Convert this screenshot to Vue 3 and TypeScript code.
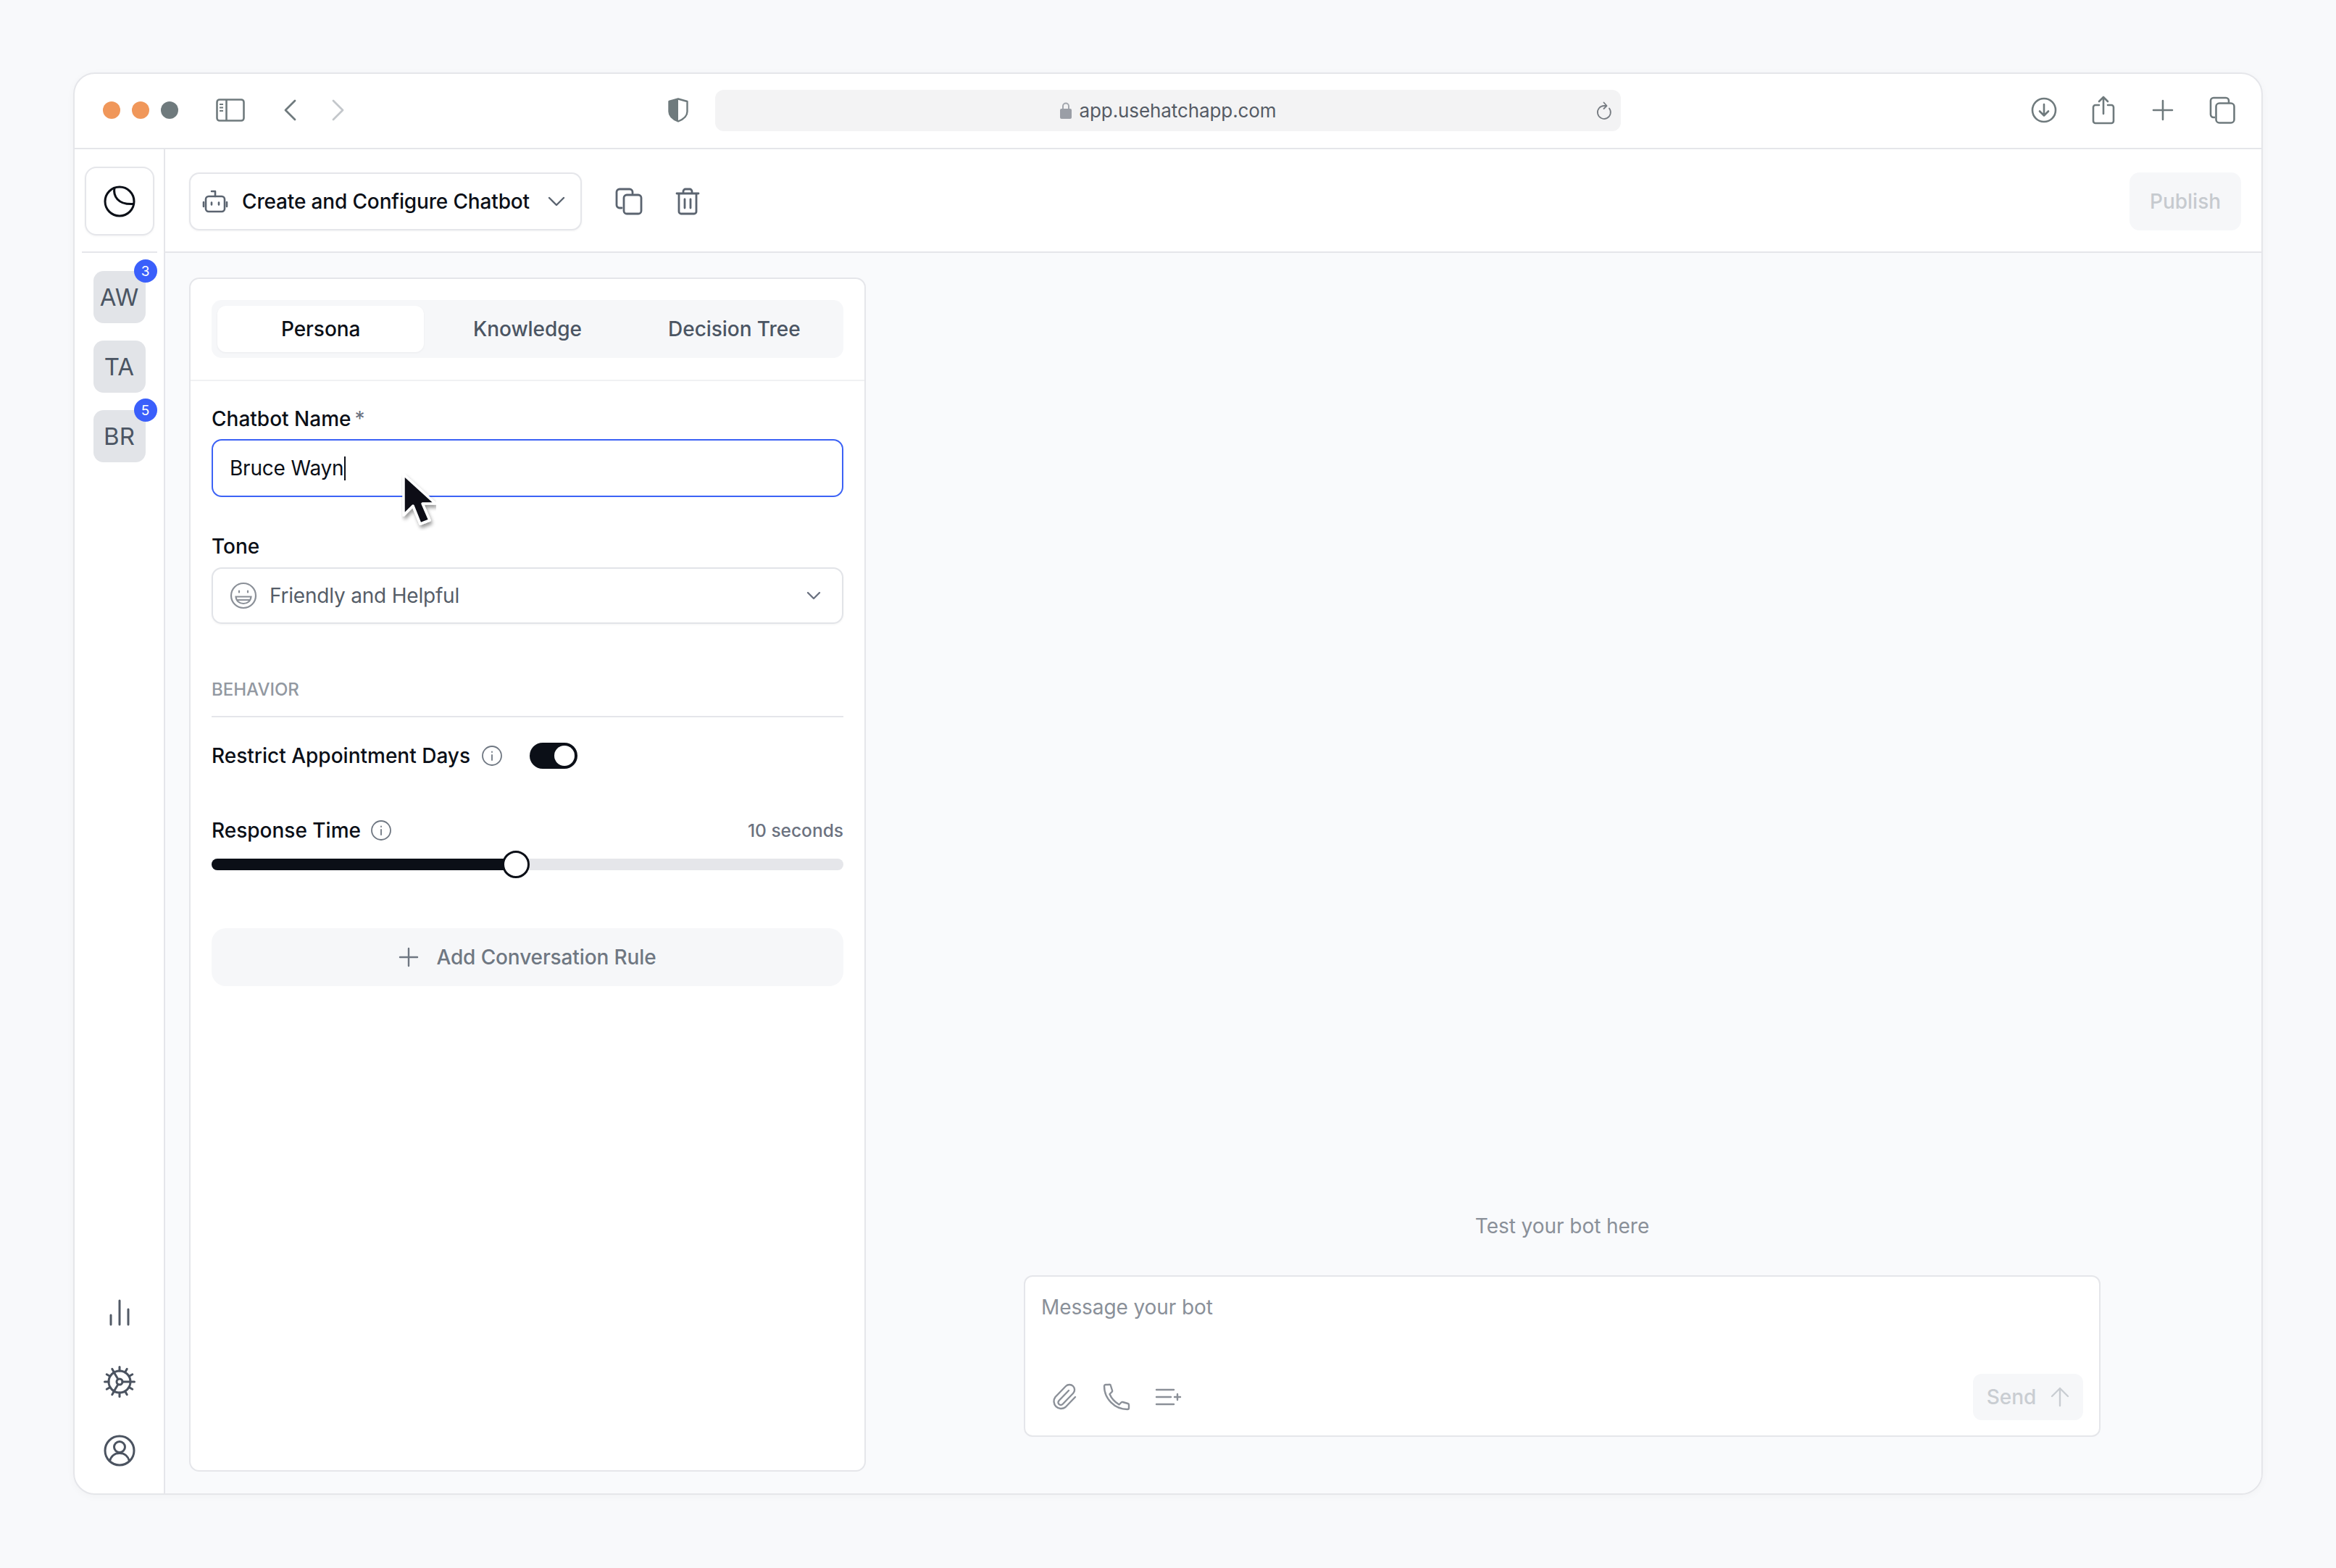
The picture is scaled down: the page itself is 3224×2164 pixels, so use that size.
<script setup lang="ts">
interface Chat { initials: string; badge?: number }
const chats: Chat[] = [
  { initials: 'AW', badge: 3 },
  { initials: 'TA' },
  { initials: 'BR', badge: 5 },
]
const tabs: string[] = ['Persona', 'Knowledge', 'Decision Tree']
const teeth: string[] = Array.from({ length: 12 }, (_, i) => {
  const a = (i * Math.PI) / 6
  const p = (r: number) => `${(22 + r * Math.cos(a)).toFixed(2)} ${(22 + r * Math.sin(a)).toFixed(2)}`
  return `M${p(15)}L${p(20.5)}`
})
const sliderPct = 48.2
</script>

<template>
  <div class="page">
    <div class="window">
      <header class="chrome">
        <div class="lights"><i class="l o"></i><i class="l o"></i><i class="l g"></i></div>
        <svg class="ic panel" width="40" height="32" viewBox="0 0 40 32" fill="none" stroke="#6f7a7d" stroke-width="2.6">
          <rect x="1.5" y="1.5" width="37" height="29" rx="3.5" />
          <path d="M14.5 1.500v29" />
          <path d="M5 8h5M5 12.500h5M5 17h5" stroke-width="2" />
        </svg>
        <svg class="ic back" width="18" height="30" viewBox="0 0 18 30" fill="none" stroke="#6f7a7d" stroke-width="2.8" stroke-linecap="round" stroke-linejoin="round"><path d="M16 2 3 15l13 13" /></svg>
        <svg class="ic fwd" width="18" height="30" viewBox="0 0 18 30" fill="none" stroke="#c3c7cb" stroke-width="2.800" stroke-linecap="round" stroke-linejoin="round"><path d="m2 2 13 13L2 28" /></svg>
        <svg class="ic shield" width="28" height="34" viewBox="0 0 28 34" fill="none">
          <path d="M14 1.500 26.500 5v14c0 6-5 10.500-12.500 13.500C6.500 29.500 1.500 25 1.500 19V5z" fill="#fff" stroke="#6f7a7d" stroke-width="2.400" stroke-linejoin="round" />
          <path d="M14 1.500 1.500 5v14c0 6 5 10.500 12.500 13.500z" fill="#6f7a7d" />
        </svg>
        <div class="url">
          <svg width="16" height="24" viewBox="0 0 16 24" fill="none"><path d="M4 11V6.500a4 4 0 0 1 8 0V11" stroke="#a3a7ae" stroke-width="2" /><rect y="10" width="16" height="14" rx="2" fill="#9a9ea6" /></svg>
          <span>app.usehatchapp.com</span>
          <svg class="reload" width="24" height="26" viewBox="0 0 24 26" fill="none" stroke="#777c82" stroke-width="1.800" stroke-linecap="round" stroke-linejoin="round"><path d="M18 9.500a9 9 0 1 1-7-3.500h3" /><path d="M10.500 1.500 14.500 6l-4 4" /></svg>
        </div>
        <div class="chrome-right">
          <svg width="36" height="36" viewBox="0 0 36 36" fill="none" stroke="#6f7a7d" stroke-width="2.600" stroke-linecap="round" stroke-linejoin="round"><circle cx="18" cy="18" r="16" /><path d="M18 10v15M12 19.500l6 6 6-6" /></svg>
          <svg width="32" height="40" viewBox="0 0 32 40" fill="none" stroke="#6f7a7d" stroke-width="2.600" stroke-linecap="round" stroke-linejoin="round"><path d="M10 13H5a3 3 0 0 0-3 3v19a3 3 0 0 0 3 3h22a3 3 0 0 0 3-3V16a3 3 0 0 0-3-3h-5" /><path d="M16 25V2M10 8l6-6 6 6" /></svg>
          <svg width="30" height="30" viewBox="0 0 30 30" fill="none" stroke="#6f7a7d" stroke-width="2.600" stroke-linecap="round"><path d="M15 2v26M2 15h26" /></svg>
          <svg width="36" height="38" viewBox="0 0 36 38" fill="none" stroke="#6f7a7d" stroke-width="2.600" stroke-linejoin="round"><path d="M8 29H6a4 4 0 0 1-4-4V6a4 4 0 0 1 4-4h17a4 4 0 0 1 4 4v3" /><rect x="9.500" y="9.500" width="25" height="27" rx="4.500" /></svg>
        </div>
      </header>

      <div class="app">
        <aside class="side">
          <div class="logo-wrap">
            <div class="logo">
              <svg width="44" height="44" viewBox="0 0 44 44" fill="none" stroke="#0b0f17" stroke-width="3"><circle cx="22" cy="22" r="20" /><path d="M15 3C13 14 19 27 41.500 25.500" /></svg>
            </div>
          </div>
          <div class="chats">
            <div v-for="c in chats" :key="c.initials" class="avatar">
              {{ c.initials }}
              <span v-if="c.badge" class="badge">{{ c.badge }}</span>
            </div>
          </div>
          <div class="side-bottom">
            <svg width="44" height="44" viewBox="0 0 44 44" fill="none" stroke="#525a66" stroke-width="3" stroke-linecap="round"><path d="M10 25v13M22 5v33M34 17v21" /></svg>
            <svg width="44" height="44" viewBox="0 0 44 44" fill="none" stroke="#4b5360" stroke-width="3" stroke-linecap="round">
              <circle cx="22" cy="22" r="15" />
              <circle cx="22" cy="22" r="4" />
              <path d="M26 22h11M20 18.500 14 8.500M20 25.500l-6 10" />
              <path v-for="t in teeth" :key="t" :d="t" />
            </svg>
            <svg width="44" height="44" viewBox="0 0 44 44" fill="none" stroke="#4b5360" stroke-width="3"><circle cx="22" cy="22" r="20" /><circle cx="22" cy="17" r="7.500" /><path d="M8.500 36.500C10 30 15 25.500 22 25.500s12 4.500 13.500 11" /></svg>
          </div>
        </aside>

        <main class="main">
          <div class="toolbar">
            <button class="picker">
              <svg width="36" height="32" viewBox="0 0 36 32" fill="none" stroke="#5b6470" stroke-width="2.600" stroke-linecap="round" stroke-linejoin="round"><rect x="5" y="9" width="26" height="21" rx="4" /><path d="M18 9V2h-5M2 17v6M34 17v6M13 17.500v3M23 17.500v3" /></svg>
              <span>Create and Configure Chatbot</span>
              <svg class="chev" width="24" height="14" viewBox="0 0 24 14" fill="none" stroke="#5b6470" stroke-width="2.400" stroke-linecap="round" stroke-linejoin="round"><path d="m2 2 10 10L22 2" /></svg>
            </button>
            <svg class="tool" width="38" height="38" viewBox="0 0 38 38" fill="none" stroke="#5b6470" stroke-width="2.800" stroke-linecap="round" stroke-linejoin="round"><path d="M9 28H6a4 4 0 0 1-4-4V6a4 4 0 0 1 4-4h14a4 4 0 0 1 4 4v2" /><rect x="12" y="10" width="24" height="26" rx="4" /></svg>
            <svg class="tool trash" width="34" height="38" viewBox="0 0 34 38" fill="none" stroke="#5b6470" stroke-width="2.800" stroke-linecap="round" stroke-linejoin="round"><path d="M2 8h30M11 8V5a3 3 0 0 1 3-3h6a3 3 0 0 1 3 3v3M5 8v25a3 3 0 0 0 3 3h18a3 3 0 0 0 3-3V8M13 16v12M21 16v12" /></svg>
            <button class="publish">Publish</button>
          </div>

          <div class="content">
            <section class="card">
              <div class="tabs-wrap">
                <div class="tabs">
                  <div v-for="(t, i) in tabs" :key="t" class="tab" :class="{ active: i === 0 }">{{ t }}</div>
                </div>
              </div>
              <div class="form">
                <label class="label">Chatbot Name<em>*</em></label>
                <div class="input focus">Bruce Wayn<i class="caret"></i></div>

                <label class="label tone">Tone</label>
                <div class="input select">
                  <svg width="38" height="38" viewBox="0 0 38 38" fill="none" stroke="#8b9098" stroke-width="2.200" stroke-linecap="round"><circle cx="19" cy="19" r="17" /><path d="M13 12.500v2M25 12.500v2" /><path d="M8.500 20.500h21c-.5 6-5 9.500-10.500 9.500S9 26.500 8.500 20.500zM10 25h18" /></svg>
                  <span>Friendly and Helpful</span>
                  <svg class="chev2" width="20" height="13" viewBox="0 0 20 13" fill="none" stroke="#6b7280" stroke-width="2.400" stroke-linecap="round" stroke-linejoin="round"><path d="m2 2 8 8 8-8" /></svg>
                </div>

                <div class="section-title">BEHAVIOR</div>

                <div class="row restrict">
                  <span class="label-inline">Restrict Appointment Days</span>
                  <svg class="info" width="30" height="30" viewBox="0 0 30 30" fill="none" stroke="#6f7782" stroke-width="1.800" stroke-linecap="round"><circle cx="15" cy="15" r="13" /><path d="M15 14v7M15 9.500v.5" /></svg>
                  <div class="toggle"><i></i></div>
                </div>

                <div class="row response">
                  <span class="label-inline">Response Time</span>
                  <svg class="info" width="30" height="30" viewBox="0 0 30 30" fill="none" stroke="#6f7782" stroke-width="1.800" stroke-linecap="round"><circle cx="15" cy="15" r="13" /><path d="M15 14v7M15 9.500v.5" /></svg>
                  <span class="secs">10 seconds</span>
                </div>
                <div class="slider">
                  <div class="fill" :style="{ width: sliderPct + '%' }"></div>
                  <i class="thumb" :style="{ left: sliderPct + '%' }"></i>
                </div>

                <button class="add">
                  <svg width="28" height="28" viewBox="0 0 28 28" fill="none" stroke="#6f7782" stroke-width="2.400" stroke-linecap="round"><path d="M14 2v24M2 14h24" /></svg>
                  <span>Add Conversation Rule</span>
                </button>
              </div>
            </section>

            <section class="chat">
              <p class="hint">Test your bot here</p>
              <div class="composer">
                <div class="placeholder">Message your bot</div>
                <div class="composer-bar">
                  <svg width="38" height="38" viewBox="0 0 38 38" fill="none" stroke="#8b9098" stroke-width="2.400" stroke-linecap="round" stroke-linejoin="round"><path d="M25 10 11.500 24a3.500 3.500 0 0 0 5 5L31 14a7 7 0 0 0-10-10L6.500 19a10 10 0 0 0 14 14L34 19" /></svg>
                  <svg width="38" height="38" viewBox="0 0 38 38" fill="none" stroke="#8b9098" stroke-width="2.400" stroke-linecap="round" stroke-linejoin="round"><path d="M8 2H4a2 2 0 0 0-2 2c0 17 14 32 32 32a2 2 0 0 0 2-2v-4a2 2 0 0 0-1.500-2l-7-2a2 2 0 0 0-2 .5l-3 3C16 25.500 12 21 9.500 15l3-3a2 2 0 0 0 .5-2l-2-6.500A2 2 0 0 0 8 2z" /></svg>
                  <svg width="38" height="26" viewBox="0 0 38 26" fill="none" stroke="#8b9098" stroke-width="2.400" stroke-linecap="round"><path d="M2 3h24M2 13h20M2 23h24M31 9v8M27 13h8" /></svg>
                  <button class="send">
                    <span>Send</span>
                    <svg width="26" height="28" viewBox="0 0 26 28" fill="none" stroke="#c9cdd2" stroke-width="2.400" stroke-linecap="round" stroke-linejoin="round"><path d="M13 26V2M2 13 13 2l11 11" /></svg>
                  </button>
                </div>
              </div>
            </section>
          </div>
        </main>
      </div>
    </div>

    <svg class="cursor" width="48" height="80" viewBox="0 0 48 80">
      <defs>
        <filter id="cursor-shadow" x="-40%" y="-20%" width="180%" height="150%"><feDropShadow dx="2" dy="4" stdDeviation="2.500" flood-color="#000" flood-opacity=".4" /></filter>
      </defs>
      <path d="M3 2v56l13-13 10 25 13-5-10-23h18z" fill="#0b0f17" stroke="#fff" stroke-width="3.500" stroke-linejoin="round" filter="url(#cursor-shadow)" />
    </svg>
  </div>
</template>

<style>
html, body { margin: 0; background: #f8f9fb; }
</style>

<style scoped>
* { box-sizing: border-box; }
.page {
  position: relative;
  width: 3224px;
  height: 2164px;
  padding: 100px 101px 0 101px;
  background: #f8f9fb;
  font-family: Inter, "Liberation Sans", sans-serif;
  color: #0b0f17;
  font-size: 28px;
}
button { font-family: inherit; border: 0; padding: 0; }
.window {
  width: 3022px;
  height: 1963px;
  background: #fff;
  border: 2px solid #e5e6ea;
  border-radius: 30px;
  overflow: hidden;
  display: flex;
  flex-direction: column;
  box-shadow: 0 2px 12px rgba(20, 24, 40, .03);
}
.chrome {
  height: 104px;
  flex: none;
  display: flex;
  align-items: center;
  padding: 0 0 2px 39px;
  border-bottom: 2px solid #e5e6ea;
  position: relative;
}
.lights { display: flex; gap: 16px; }
.l { width: 24px; height: 24px; border-radius: 50%; display: block; }
.o { background: #f0975a; }
.g { background: #6f7a7d; }
.ic { flex: none; }
.panel { margin-left: 52px; }
.back { margin-left: 53px; }
.fwd { margin-left: 49px; }
.shield { margin-left: 446px; }
.url {
  width: 1250px;
  height: 57px;
  margin-left: 37px;
  background: #f3f3f4;
  border-radius: 12px;
  display: flex;
  align-items: center;
  justify-content: center;
  gap: 11px;
  color: #555b65;
  font-size: 26px;
  letter-spacing: -.1px;
  position: relative;
}
.reload { position: absolute; right: 10px; top: 16px; }
.chrome-right {
  margin-left: auto;
  margin-right: 13px;
  display: grid;
  grid-template-columns: repeat(4, 82px);
  justify-items: center;
  align-items: center;
}

.app { flex: 1; display: flex; min-height: 0; }
.side {
  width: 125px;
  flex: none;
  border-right: 2px solid #e5e6ea;
  display: flex;
  flex-direction: column;
  align-items: center;
  padding: 0 10px;
}
.logo-wrap {
  height: 143px;
  width: 104px;
  flex: none;
  border-bottom: 2px solid #e5e6ea;
  display: flex;
  justify-content: center;
  padding-top: 24px;
}
.logo {
  width: 96px;
  height: 95px;
  border: 2px solid #e5e6ea;
  border-radius: 16px;
  display: flex;
  align-items: center;
  justify-content: center;
  box-shadow: 0 1px 3px rgba(20, 24, 40, .05);
}
.chats { display: flex; flex-direction: column; gap: 24px; padding-top: 25px; }
.avatar {
  position: relative;
  width: 72px;
  height: 72px;
  border-radius: 14px;
  background: #e2e4e8;
  color: #4b5563;
  font-size: 33px;
  display: flex;
  align-items: center;
  justify-content: center;
}
.badge {
  position: absolute;
  top: -16px;
  right: -16px;
  width: 32px;
  height: 32px;
  border-radius: 50%;
  background: #3a5ffb;
  color: #fff;
  font-size: 19px;
  display: flex;
  align-items: center;
  justify-content: center;
}
.side-bottom {
  margin-top: auto;
  padding-bottom: 37px;
  display: flex;
  flex-direction: column;
  gap: 51px;
}
.side-bottom svg { display: block; }

.main { flex: 1; min-width: 0; display: flex; flex-direction: column; background: #f9fafc; }
.toolbar {
  height: 143px;
  flex: none;
  background: #fff;
  border-bottom: 2px solid #e5e6ea;
  display: flex;
  align-items: center;
  padding: 2px 28px 0 33px;
}
.picker {
  width: 542px;
  height: 80px;
  background: #fff;
  border: 2px solid #e5e6ea;
  border-radius: 14px;
  display: flex;
  align-items: center;
  padding: 0 21px 0 16px;
  font-size: 28px;
  font-weight: 500;
  letter-spacing: -.15px;
  color: #0b0f17;
  box-shadow: 0 1px 3px rgba(20, 24, 40, .05);
}
.picker span { margin-left: 19px; }
.chev { margin-left: auto; }
.tool { margin-left: 46px; flex: none; }
.trash { margin-left: 45px; }
.publish {
  margin-left: auto;
  width: 154px;
  height: 80px;
  background: #f6f7f9;
  color: #c6cacf;
  border-radius: 14px;
  font-size: 28px;
  font-weight: 500;
}

.content { flex: 1; display: flex; min-height: 0; padding: 34px 0 0 33px; }
.card {
  width: 934px;
  height: 1648px;
  flex: none;
  background: #fff;
  border: 2px solid #e5e6ea;
  border-radius: 14px;
  display: flex;
  flex-direction: column;
}
.tabs-wrap { padding: 29px 29px 30px; border-bottom: 2px solid #f0f1f3; }
.tabs {
  height: 80px;
  background: #f6f7f9;
  border-radius: 14px;
  padding: 8px;
  display: grid;
  grid-template-columns: repeat(3, 1fr);
}
.tab {
  display: flex;
  align-items: center;
  justify-content: center;
  color: #4b5563;
  font-size: 28px;
  font-weight: 500;
  letter-spacing: -.05px;
  border-radius: 12px;
}
.tab.active { background: #fff; color: #0b0f17; box-shadow: 0 1px 3px rgba(20, 24, 40, .05); }
.form { padding: 35px 29px 0; display: flex; flex-direction: column; }
.label { font-size: 28px; font-weight: 500; line-height: 34px; display: block; }
.label em { font-style: normal; color: #6b7280; margin-left: 5px; font-weight: 400; }
.tone { margin-top: 51px; }
.input {
  height: 80px;
  margin-top: 11px;
  border: 2px solid #e2e4e8;
  border-radius: 14px;
  display: flex;
  align-items: center;
  padding-left: 23px;
  font-size: 28px;
  letter-spacing: -.2px;
}
.focus { border: 2px solid #3c62f5; }
.caret { display: block; width: 2px; height: 33px; background: #0b0f17; margin-left: 1px; }
.select { height: 78px; margin-top: 12px; color: #555d68; padding: 0 29px 0 23px; box-shadow: 0 1px 3px rgba(20, 24, 40, .05); }
.select span { margin-left: 17px; }
.chev2 { margin-left: auto; }
.section-title {
  margin-top: 74px;
  font-size: 24px;
  font-weight: 500;
  line-height: 34px;
  color: #9298a1;
  padding-bottom: 19px;
  border-bottom: 2px solid #e5e6ea;
}
.row { display: flex; align-items: center; }
.label-inline { font-size: 28px; font-weight: 500; }
.info { margin-left: 13px; flex: none; }
.restrict { height: 36px; margin-top: 35px; }
.restrict .info { margin-left: 15px; }
.toggle {
  width: 66px;
  height: 36px;
  margin-left: 37px;
  border-radius: 18px;
  background: #0b0f17;
  padding: 4px 4px 4px 34px;
}
.toggle i { display: block; width: 28px; height: 28px; border-radius: 50%; background: #fff; }
.response { height: 36px; margin-top: 67px; }
.secs { margin-left: auto; color: #6b7280; font-size: 24.5px; font-weight: 500; }
.slider {
  position: relative;
  height: 16px;
  margin-top: 21px;
  background: #e5e6ea;
  border-radius: 8px;
}
.fill { height: 100%; background: #0b0f17; border-radius: 8px 0 0 8px; }
.thumb {
  position: absolute;
  top: 50%;
  width: 38px;
  height: 38px;
  margin: -19px 0 0 -19px;
  background: #fff;
  border: 3px solid #0b0f17;
  border-radius: 50%;
}
.add {
  height: 80px;
  margin-top: 80px;
  background: #f6f7f9;
  border-radius: 20px;
  color: #6f7782;
  font-size: 28px;
  font-weight: 500;
  letter-spacing: -.12px;
  display: flex;
  align-items: center;
  justify-content: center;
  gap: 24px;
}

.chat {
  flex: 1;
  min-width: 0;
  height: 1600px;
  display: flex;
  flex-direction: column;
  justify-content: flex-end;
  padding: 0 222px 0 218px;
}
.hint { margin: 0 0 51px; text-align: center; color: #8a9099; font-size: 28px; line-height: 34px; letter-spacing: -.05px; }
.composer {
  height: 223px;
  background: #fff;
  border: 2px solid #e5e6ea;
  border-radius: 12px;
  padding: 25px 22px 21px 22px;
  display: flex;
  flex-direction: column;
}
.placeholder { color: #8a9099; font-size: 28px; line-height: 34px; letter-spacing: -.1px; }
.composer-bar { margin-top: auto; display: flex; align-items: center; gap: 34px; padding-left: 13px; }
.send {
  margin-left: auto;
  width: 152px;
  height: 64px;
  background: #f6f7f9;
  color: #c9cdd2;
  border-radius: 12px;
  font-size: 28px;
  font-weight: 500;
  display: flex;
  align-items: center;
  justify-content: center;
  gap: 20px;
}

.cursor { position: absolute; left: 554px; top: 653px; pointer-events: none; }
</style>
